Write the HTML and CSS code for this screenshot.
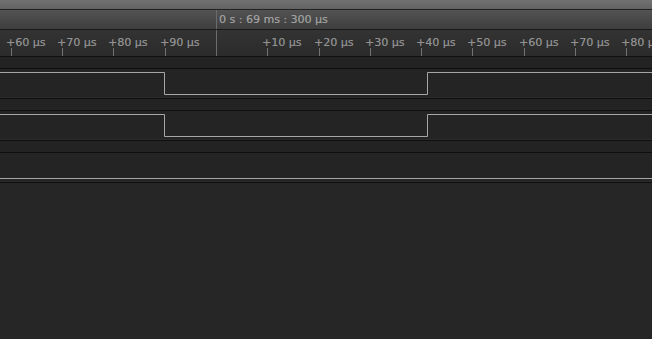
FILE: index.html
```html
<!DOCTYPE html>
<html>
<head>
<meta charset="utf-8">
<link rel="stylesheet" href="styles.css">
</head>
<body>
<div class="app">
  <div class="topbar"></div>
  <div class="header">
    <div class="marker-line"></div>
    <span class="header-time">0 s : 69 ms : 300 µs</span>
  </div>
  <div class="ruler">
    <div class="marker-line"></div>
    <div class="tick" style="left:11px"><span>+60 µs</span></div>
    <div class="tick" style="left:62px"><span>+70 µs</span></div>
    <div class="tick" style="left:113px"><span>+80 µs</span></div>
    <div class="tick" style="left:165px"><span>+90 µs</span></div>
    <div class="tick" style="left:267px"><span>+10 µs</span></div>
    <div class="tick" style="left:319px"><span>+20 µs</span></div>
    <div class="tick" style="left:370px"><span>+30 µs</span></div>
    <div class="tick" style="left:421px"><span>+40 µs</span></div>
    <div class="tick" style="left:472px"><span>+50 µs</span></div>
    <div class="tick" style="left:524px"><span>+60 µs</span></div>
    <div class="tick" style="left:575px"><span>+70 µs</span></div>
    <div class="tick" style="left:626px"><span>+80 µs</span></div>
  </div>
  <div class="channels">
    <div class="strip"></div>
    <div class="row">
      <svg class="wave" width="652" height="28" viewBox="0 0 652 28">
        <polyline points="0,3.5 164.5,3.5 164.5,25.5 427.5,25.5 427.5,3.5 652,3.5"/>
      </svg>
    </div>
    <div class="strip"></div>
    <div class="row">
      <svg class="wave" width="652" height="28" viewBox="0 0 652 28">
        <polyline points="0,3.5 164.5,3.5 164.5,25.5 427.5,25.5 427.5,3.5 652,3.5"/>
      </svg>
    </div>
    <div class="strip"></div>
    <div class="row">
      <svg class="wave" width="652" height="28" viewBox="0 0 652 28">
        <polyline points="0,25.5 652,25.5"/>
      </svg>
    </div>
  </div>
  <div class="empty"></div>
</div>
</body>
</html>
```

FILE: styles.css
```css
html, body {
  margin: 0;
  padding: 0;
  background: #262626;
}
.app {
  width: 652px;
  height: 339px;
  overflow: hidden;
  display: flex;
  flex-direction: column;
  font-family: "DejaVu Sans", sans-serif;
}
.topbar {
  height: 9px;
  background: linear-gradient(#727272, #626262);
  border-bottom: 1px solid #222;
}
.header {
  position: relative;
  height: 19px;
  background: linear-gradient(#535353, #3e3e3e);
  border-bottom: 1px solid #1a1a1a;
}
.header-time {
  position: absolute;
  left: 219px;
  top: 3px;
  font-size: 11px;
  line-height: 13px;
  color: #a0a0a0;
  text-shadow: 0.3px 0 0 rgba(160, 160, 160, 0.6);
}
.marker-line {
  position: absolute;
  left: 216px;
  top: 0;
  bottom: 0;
  width: 1px;
  background: #6c6c6c;
}
.ruler {
  position: relative;
  height: 26px;
  background: linear-gradient(#333333, #2b2b2b);
  border-bottom: 1px solid #111;
}
.tick {
  position: absolute;
  top: 18px;
  width: 1px;
  height: 8px;
  background: #727272;
}
.tick span {
  position: absolute;
  left: -5px;
  top: -12px;
  white-space: nowrap;
  font-size: 11px;
  line-height: 13px;
  color: #929292;
  text-shadow: 0.3px 0 0 rgba(146, 146, 146, 0.6);
}
.channels {
  display: flex;
  flex-direction: column;
}
.strip {
  height: 11px;
  background: #232323;
  border-bottom: 1px solid #0f0f0f;
}
.row {
  height: 28px;
  background: #242424;
  border-bottom: 1px solid #2c2c2c;
  box-shadow: 0 1px 0 #0f0f0f;
  margin-bottom: 1px;
}
.wave {
  display: block;
}
.wave polyline {
  fill: none;
  stroke: #a6a6a6;
  stroke-width: 1;
}
.empty {
  flex: 1;
  background: #262626;
}
```
